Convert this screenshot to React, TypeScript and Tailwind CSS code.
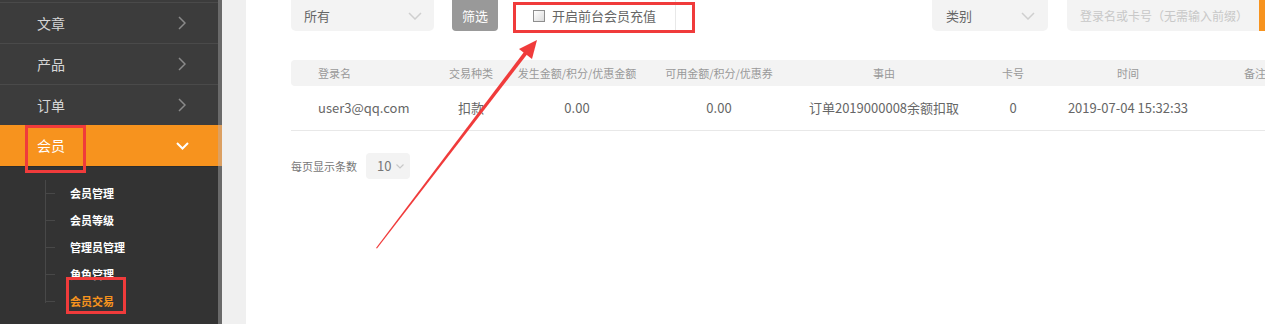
import React from 'react';

const FONT = { fontFamily: '"Noto Sans CJK SC", "Noto Sans", sans-serif' };

const MENU = ['文章', '产品', '订单'];
const SUBMENU = ['会员管理', '会员等级', '管理员管理', '角色管理', '会员交易'];

const COLS = [
  { head: '登录名', cell: 'user3@qq.com', w: 'w-[129px]', left: true },
  { head: '交易种类', cell: '扣款', w: 'w-[102px]' },
  { head: '发生金额/积分/优惠金额', cell: '0.00', w: 'w-[110px]' },
  { head: '可用金额/积分/优惠券', cell: '0.00', w: 'w-[174px]' },
  { head: '事由', cell: '订单2019000008余额扣取', w: 'w-[156px]' },
  { head: '卡号', cell: '0', w: 'w-[102px]' },
  { head: '时间', cell: '2019-07-04 15:32:33', w: 'w-[128px]' },
  { head: '备注', cell: '', w: 'w-[126px]' },
];

function Chevron({ className = '' }: { className?: string }) {
  return (
    <svg width="14" height="8" viewBox="0 0 14 8" className={className}>
      <path d="M1 1l6 6 6-6" fill="none" stroke="#cfcfcf" strokeWidth="1.5" />
    </svg>
  );
}

function Sidebar() {
  return (
    <div className="w-[218px] shrink-0 flex flex-col bg-[#333333]">
      <div className="h-[2px] bg-[#3c3c3c]" />
      {MENU.map(m => (
        <div key={m} className="h-[41px] border-t border-[#4a4a4a] bg-[#3c3c3c] flex items-center justify-between pl-[37px] pr-[32px]">
          <span className="text-[14px] text-[#d6d6d6]">{m}</span>
          <svg width="8" height="14" viewBox="0 0 8 14">
            <path d="M1 1l6 6-6 6" fill="none" stroke="#8a8a8a" strokeWidth="1.5" />
          </svg>
        </div>
      ))}
      <div className="h-[41px] bg-[#f7931e] flex items-center justify-between pl-[37px] pr-[29px]">
        <span className="text-[14px] text-white">会员</span>
        <svg width="13" height="8" viewBox="0 0 13 8">
          <path d="M1 1l5.5 5.5L12 1" fill="none" stroke="#ffffff" strokeWidth="2" />
        </svg>
      </div>
      <div className="relative flex-1 border-t border-[#2c2c2c] pt-[13px]">
        <div className="absolute left-[45px] top-[13px] h-[123px] w-px bg-[#484848]" />
        {SUBMENU.map((s, i) => (
          <div key={s} className="h-[27px] flex items-center relative">
            <div className="absolute left-[45px] top-[13px] w-[10px] h-px bg-[#484848]" />
            <span className={`ml-[70px] text-[11px] font-bold ${i === 4 ? 'text-[#f7931e]' : 'text-white'}`}>{s}</span>
          </div>
        ))}
      </div>
    </div>
  );
}

export default function App() {
  return (
    <div style={FONT} className="relative w-[1265px] h-[324px] overflow-hidden flex bg-white">
      <Sidebar />
      <div className="w-[4px] shrink-0 flex flex-col bg-[#6a6a6a]">
        <div className="h-[125px]" />
        <div className="h-[41px] bg-[#dca062]" />
      </div>
      <div className="w-[24px] shrink-0 bg-[#f0f0f0]" />

      <div className="flex-1 pl-[45px] min-w-0">
        {/* filters */}
        <div className="flex h-[31px] items-stretch">
          <div className="w-[143px] shrink-0 bg-[#f3f3f3] rounded-b-[5px] flex items-center justify-between pl-[13px] pr-[12px]">
            <span className="text-[13px] text-[#666]">所有</span>
            <Chevron />
          </div>
          <div className="ml-[18px] w-[46px] shrink-0 bg-[#999999] rounded-b-[4px] flex items-center justify-center text-[13px] text-white">筛选</div>
          <div className="ml-[20px] w-[158px] shrink-0 border-r border-[#e8e8e8] flex items-center pl-[15px]">
            <span className="w-[12px] h-[12px] border border-[#8e8e8e] bg-gradient-to-br from-white to-[#dcdcdc]" />
            <span className="ml-[7px] text-[13px] text-[#666]">开启前台会员充值</span>
          </div>
          <div className="ml-[256px] w-[116px] shrink-0 bg-[#f3f3f3] rounded-b-[5px] flex items-center justify-between pl-[14px] pr-[13px]">
            <span className="text-[13px] text-[#666]">类别</span>
            <Chevron />
          </div>
          <div className="ml-[19px] w-[192px] shrink-0 bg-[#f3f3f3] rounded-bl-[5px] flex items-center pl-[13px]">
            <span className="text-[12px] text-[#c8c8c8] whitespace-nowrap">登录名或卡号（无需输入前缀）</span>
          </div>
          <div className="w-[60px] shrink-0 bg-[#f7931e]" />
        </div>

        {/* table */}
        <div className="mt-[29px] h-[26px] flex items-center bg-[#f3f3f3] rounded-l-[4px]">
          {COLS.map(c => (
            <div key={c.head} className={`${c.w} shrink-0 flex ${c.left ? 'pl-[27px]' : 'justify-center'} whitespace-nowrap text-[11px] text-[#999]`}>
              {c.head}
            </div>
          ))}
        </div>
        <div className="h-[45px] flex items-center border-b border-[#e8e8e8]">
          {COLS.map(c => (
            <div key={c.head} className={`${c.w} shrink-0 flex ${c.left ? 'pl-[27px]' : 'justify-center'} whitespace-nowrap text-[13px] text-[#666]`}>
              {c.cell}
            </div>
          ))}
        </div>

        {/* page size */}
        <div className="mt-[22px] flex items-center">
          <span className="text-[11px] text-[#777]">每页显示条数</span>
          <div className="ml-[9px] w-[44px] h-[26px] bg-[#f3f3f3] rounded-[4px] flex items-center pl-[11px] gap-[5px]">
            <span className="text-[13px] text-[#777]">10</span>
            <svg width="8" height="5" viewBox="0 0 8 5">
              <path d="M0.5 0.5l3.5 3.5 3.5-3.5" fill="none" stroke="#c8c8c8" strokeWidth="1.2" />
            </svg>
          </div>
        </div>
      </div>

      {/* annotations */}
      <div className="absolute left-[25px] top-[125px] w-[61px] h-[48px] border-[3px] border-[#f03b3b]" />
      <div className="absolute left-[66px] top-[277px] w-[60px] h-[37px] border-[3px] border-[#f03b3b]" />
      <div className="absolute left-[513px] top-[2px] w-[182px] h-[31px] border-[3px] border-[#f03b3b]" />
      <svg className="absolute left-0 top-0 pointer-events-none" width="1265" height="324" viewBox="0 0 1265 324">
        <polygon points="376,248 377,248.6 528.5,52.5 525.5,50" fill="#f03b3b" />
        <polygon points="537,40 519,49 532,59" fill="#f03b3b" />
      </svg>
    </div>
  );
}
